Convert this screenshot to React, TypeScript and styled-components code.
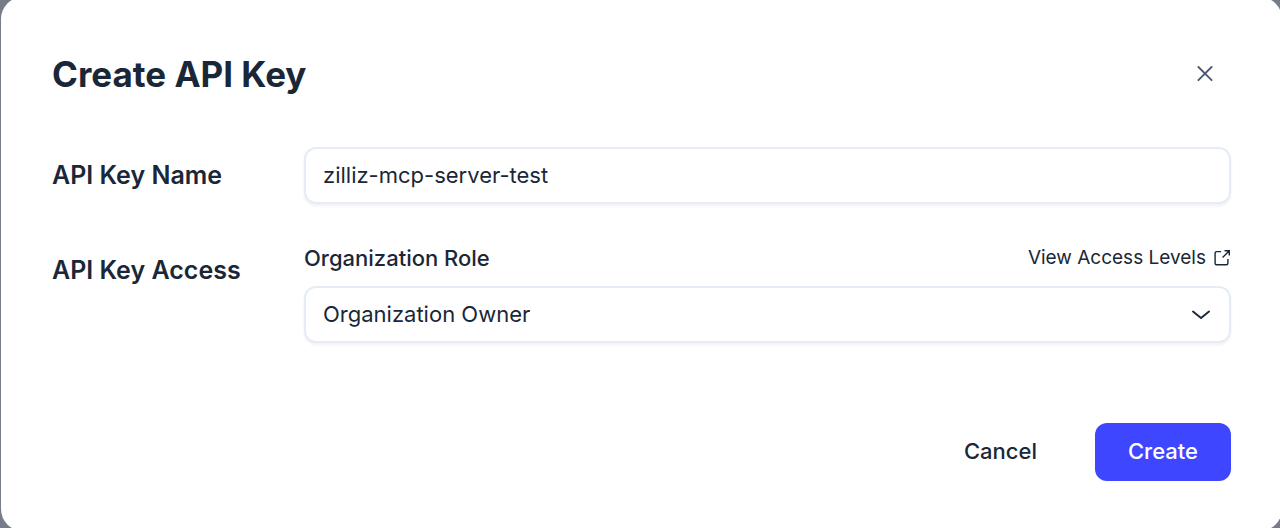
import React from "react";
import styled, { createGlobalStyle } from "styled-components";

const GlobalStyle = createGlobalStyle`
  *, *::before, *::after { box-sizing: border-box; }
  body { margin: 0; background: #767d88; }
  button, input, select { font: inherit; color: inherit; margin: 0; }
`;

const Backdrop = styled.div`
  display: flex;
  min-height: 100vh;
  overflow: hidden;
  background: #767d88;
  color: #1a2738;
  font-family: Inter, "Liberation Sans", sans-serif;
  font-size: 22px;
  line-height: 32px;
`;

const Dialog = styled.form`
  flex: 1;
  margin: -3px -2px -3px 1px;
  padding: 52px 51px 50px;
  border-radius: 22px;
  background: #ffffff;
`;

const Header = styled.header`
  display: flex;
  align-items: center;
  justify-content: space-between;
  margin-bottom: 48px;
`;

const Title = styled.h1`
  margin: 0;
  font-size: 35px;
  line-height: 50px;
  font-weight: 700;
`;

const CloseButton = styled.button`
  display: grid;
  place-items: center;
  width: 52px;
  height: 50px;
  padding: 0;
  border: 0;
  background: none;
  color: #475873;
  cursor: pointer;
`;

const Row = styled.div`
  display: grid;
  grid-template-columns: 252px 1fr;
  align-items: start;

  & + & {
    margin-top: 38px;
  }
`;

const RowLabel = styled.label`
  padding: 12px 0;
  font-size: 25px;
  font-weight: 600;
`;

const FieldHead = styled.div`
  display: flex;
  align-items: center;
  justify-content: space-between;
  margin-bottom: 12px;
`;

const FieldLabel = styled.label`
  font-weight: 500;
`;

const Link = styled.a`
  display: inline-flex;
  align-items: center;
  gap: 8px;
  color: inherit;
  font-size: 19px;
  text-decoration: none;
`;

const TextInput = styled.input`
  width: 100%;
  height: 57px;
  padding: 0 17px 2px;
  border: 2px solid #e6ecf6;
  border-radius: 12px;
  background: #ffffff;
  box-shadow: 0 2px 3px rgba(16, 24, 40, 0.06);
  outline: none;
`;

const SelectBox = styled.div`
  position: relative;
`;

const Select = styled(TextInput).attrs({ as: "select" })`
  display: block;
  appearance: none;
`;

const ChevronIcon = styled.svg`
  position: absolute;
  top: 50%;
  right: 21px;
  transform: translateY(-50%);
  pointer-events: none;
`;

const Footer = styled.footer`
  display: flex;
  justify-content: flex-end;
  gap: 25px;
  margin-top: 80px;
`;

const Button = styled.button<{ $primary?: boolean }>`
  height: 58px;
  padding: 0 33px 2px;
  border: 0;
  border-radius: 12px;
  background: ${(p) => (p.$primary ? "#3f46ff" : "transparent")};
  color: ${(p) => (p.$primary ? "#ffffff" : "inherit")};
  font-weight: 500;
  cursor: pointer;
`;

export default function App() {
  return (
    <>
      <GlobalStyle />
      <Backdrop>
        <Dialog role="dialog" aria-labelledby="dialog-title" onSubmit={(e) => e.preventDefault()}>
          <Header>
            <Title id="dialog-title">Create API Key</Title>
            <CloseButton type="button" aria-label="Close">
              <svg width="16" height="16" viewBox="0 0 16 16" fill="none" stroke="currentColor" strokeWidth="1.8" strokeLinecap="round">
                <path d="M1.4 1 14.6 14.2M14.6 1 1.4 14.2" />
              </svg>
            </CloseButton>
          </Header>
          <Row>
            <RowLabel htmlFor="key-name">API Key Name</RowLabel>
            <TextInput id="key-name" type="text" defaultValue="zilliz-mcp-server-test" />
          </Row>
          <Row>
            <RowLabel as="div">API Key Access</RowLabel>
            <div>
              <FieldHead>
                <FieldLabel htmlFor="org-role">Organization Role</FieldLabel>
                <Link href="#access-levels">
                  View Access Levels
                  <svg width="17" height="17" viewBox="0 0 17 17" fill="none" stroke="currentColor" strokeWidth="1.4">
                    <path d="M7 1.6H2.6Q1.1 1.6 1.1 3.1V13.3Q1.1 14.8 2.6 14.8H12.4Q13.9 14.8 13.9 13.3V9" />
                    <path d="M10.5 0.8H15.3V5.5M15.3 0.8 8.6 7.5" />
                  </svg>
                </Link>
              </FieldHead>
              <SelectBox>
                <Select id="org-role" defaultValue="owner">
                  <option value="owner">Organization Owner</option>
                </Select>
                <ChevronIcon width="18" height="10" viewBox="0 0 18 10" fill="none" stroke="currentColor" strokeWidth="1.9" strokeLinecap="round" strokeLinejoin="round">
                  <path d="M1 1.5 9 8 17 1.5" />
                </ChevronIcon>
              </SelectBox>
            </div>
          </Row>
          <Footer>
            <Button type="button">Cancel</Button>
            <Button type="submit" $primary>Create</Button>
          </Footer>
        </Dialog>
      </Backdrop>
    </>
  );
}
